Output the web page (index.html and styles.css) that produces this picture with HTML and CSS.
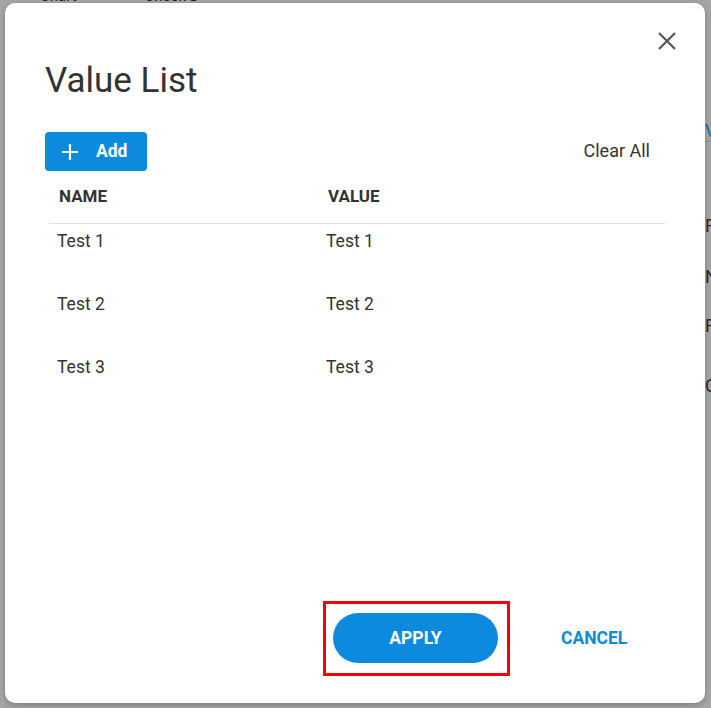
FILE: index.html
```html
<!DOCTYPE html>
<html>
<head>
<meta charset="utf-8">
<link rel="stylesheet" href="styles.css">
</head>
<body>
<div class="backdrop">
  <div class="bg-top">
    <span class="bg-t1">Chart</span>
    <span class="bg-t2">Check D</span>
  </div>
  <div class="bg-right">
    <span class="bg-v">V</span>
    <span class="bg-l l1">F</span>
    <span class="bg-l l2">N</span>
    <span class="bg-l l3">F</span>
    <span class="bg-l l4">C</span>
  </div>
</div>
<div class="dialog">
  <button class="close" aria-label="Close">
    <svg width="20" height="20" viewBox="0 0 20 20"><path d="M2 2 L18 18 M18 2 L2 18" stroke="#555" stroke-width="2.2" fill="none"/></svg>
  </button>
  <h1 class="title">Value List</h1>
  <div class="toolbar">
    <button class="add-btn">
      <svg width="18" height="18" viewBox="0 0 18 18"><path d="M9 1 V17 M1 9 H17" stroke="#fff" stroke-width="2.2" fill="none"/></svg>
      <span>Add</span>
    </button>
    <button class="clear-btn">Clear All</button>
  </div>
  <div class="table">
    <div class="thead">
      <div class="th c1">NAME</div>
      <div class="th c2">VALUE</div>
    </div>
    <div class="row"><div class="td c1">Test 1</div><div class="td c2">Test 1</div></div>
    <div class="row"><div class="td c1">Test 2</div><div class="td c2">Test 2</div></div>
    <div class="row"><div class="td c1">Test 3</div><div class="td c2">Test 3</div></div>
  </div>
  <div class="spacer"></div>
  <div class="actions">
    <div class="highlight"><button class="apply">APPLY</button></div>
    <button class="cancel">CANCEL</button>
  </div>
</div>
</body>
</html>
```

FILE: styles.css
```css
* { box-sizing: border-box; }
html, body { margin: 0; padding: 0; }
body {
  width: 711px;
  height: 708px;
  background: #a6a6a6;
  font-family: Roboto, "Liberation Sans", sans-serif;
  position: relative;
  overflow: hidden;
}
.backdrop {
  position: absolute;
  inset: 0;
}
.bg-top {
  position: absolute;
  top: -13px;
  left: 40px;
  font-size: 15px;
  color: #222;
  display: flex;
  gap: 68px;
}
.bg-right {
  position: absolute;
  left: 705px;
  top: 120px;
  width: 20px;
  display: flex;
  flex-direction: column;
  font-size: 18px;
  color: #2a2a2a;
}
.bg-v {
  color: #1a6aa8;
  height: 22px;
  border-bottom: 1px solid #8f8f8f;
  margin-bottom: 74px;
}
.bg-l { line-height: 20px; }
.l1 { margin-top: 0; }
.l2 { margin-top: 31px; }
.l3 { margin-top: 29px; }
.l4 { margin-top: 40px; }

.dialog {
  position: absolute;
  left: 5px;
  top: 3px;
  width: 700px;
  height: 700px;
  background: #fff;
  border-radius: 10px;
  box-shadow: 0 2px 6px rgba(0,0,0,0.25);
  display: flex;
  flex-direction: column;
  padding: 0 40px 0 40px;
}
.close {
  position: absolute;
  right: 28px;
  top: 28px;
  width: 20px;
  height: 20px;
  padding: 0;
  border: 0;
  background: none;
  display: flex;
}
.title {
  margin: 58px 0 0 0;
  font-size: 35px;
  font-weight: 400;
  color: #333;
  line-height: 40px;
}
.toolbar {
  margin-top: 31px;
  display: flex;
  justify-content: space-between;
  align-items: center;
}
.add-btn {
  width: 102px;
  height: 39px;
  background: #0b8ade;
  border: 0;
  border-radius: 4px;
  color: #fff;
  font-family: inherit;
  font-weight: 700;
  font-size: 17.5px;
  display: flex;
  align-items: center;
  padding: 0 0 0 16px;
  gap: 17px;
}
.add-btn span { margin-top: -1px; }
.clear-btn {
  border: 0;
  background: none;
  font-family: inherit;
  font-size: 18px;
  color: #333;
  padding: 0;
  margin-right: 15px;
  margin-top: -3px;
}
.table {
  margin: 0 0 0 4px;
  width: 616px;
}
.thead {
  display: grid;
  grid-template-columns: 269px 1fr;
  height: 53px;
  border-bottom: 1px solid #e2e2e2;
  align-items: center;
  padding-bottom: 2px;
}
.th {
  font-size: 17px;
  font-weight: 700;
  color: #333;
  padding-left: 10px;
}
.row {
  display: grid;
  grid-template-columns: 269px 1fr;
  height: 63px;
  padding-top: 6px;
}
.td {
  font-size: 17.5px;
  color: #333;
  padding-left: 8px;
  line-height: 22px;
}
.spacer { flex: 1; }
.actions {
  display: flex;
  align-items: center;
  margin-bottom: 27px;
  margin-left: 278px;
}
.highlight {
  border: 3px solid #f00;
  padding: 9px 10px 10px 7px;
  width: 187px;
  height: 75px;
}
.apply {
  width: 165px;
  height: 50px;
  border-radius: 25px;
  border: 0;
  background: #0b8ade;
  color: #fff;
  font-family: inherit;
  font-weight: 700;
  font-size: 17.5px;
}
.cancel {
  margin-left: 51px;
  border: 0;
  background: none;
  padding: 0;
  margin-top: -2px;
  color: #0b8ade;
  font-family: inherit;
  font-weight: 700;
  font-size: 17.5px;
}
```
